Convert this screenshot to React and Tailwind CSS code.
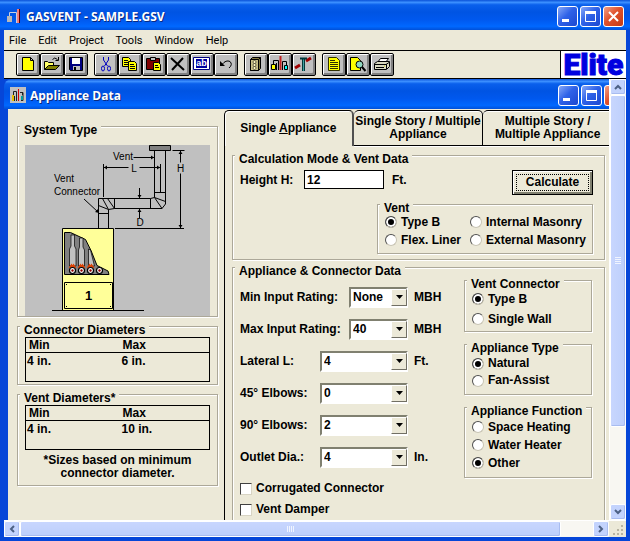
import { useState } from "react";
import clsx from "clsx";

const MENUS = ["File", "Edit", "Project", "Tools", "Window", "Help"];

const ICONS = {
  new: <path d="M6.5 4.5h8l3 3v10h-11z M14.5 4.5v3h3" fill="#ffff00" stroke="#000" />,
  open: (
    <g stroke="#000">
      <path d="M4.5 16.5v-8h3l1 1h5v3" fill="#ffff66" />
      <path d="M4.5 16.5l4-4h11l-4 4z" fill="#808000" />
      <path d="M12.5 6.5q2-3 5 0M18.5 4v3.500h-3" fill="none" />
    </g>
  ),
  save: (
    <g>
      <path d="M5.500 4.500h13v13h-12l-1-1z" fill="#000080" stroke="#000" />
      <path d="M8 5h8v6h-8z" fill="#fff" />
      <path d="M9 13h7v4h-7z" fill="#c0c0c0" />
      <path d="M10 14h2v3h-2z" fill="#000" />
    </g>
  ),
  cut: (
    <g fill="none" stroke="#0000c0">
      <path d="M9.500 4v3l4 6M14.500 4v3l-4 6" />
      <ellipse cx="9" cy="15.500" rx="1.500" ry="2.500" />
      <ellipse cx="15" cy="15.500" rx="1.500" ry="2.500" />
    </g>
  ),
  copy: (
    <g fill="#ffff00" stroke="#000">
      <path d="M4.500 4.500h6l2 2v7h-8zM6 7.500h4M6 9.500h5M6 11.500h5" />
      <path d="M10.500 8.500h6l2 2v7h-8zM12 11.500h4M12 13.500h5M12 15.500h5" />
    </g>
  ),
  paste: (
    <g stroke="#000">
      <path d="M4.500 5.500h13v11h-13z" fill="#800000" />
      <path d="M8.500 4.500h5v3h-5z" fill="#c0c0c0" />
      <path d="M11.500 9.500h5l2 2v6h-7zM13 12.500h3M13 14.500h4" fill="#ffff00" />
    </g>
  ),
  remove: <path d="M5 5l13 12M17 5L6 17" stroke="#000" strokeWidth="2" />,
  rename: (
    <g>
      <path d="M3.500 4.500h16v12h-16z" fill="#fff" stroke="#000080" />
      <path d="M6 6h11v9h-11z" fill="#0000a0" />
      <text x="11.500" y="13" textAnchor="middle" fontSize="9" fontWeight="700" fill="#fff">ab</text>
    </g>
  ),
  undo: (
    <g fill="none" stroke="#000">
      <path d="M8 11.500q4-5 8-3q3 3-1 6.500" />
      <path d="M6 8v5h5z" fill="#000" stroke="none" />
    </g>
  ),
  block: (
    <g stroke="#000">
      <path d="M6.500 6.500l2-2h8v11l-2 2h-8z" fill="#807840" />
      <path d="M6.500 6.500h8v11h-8z" fill="#c8c088" />
      <path d="M14.500 6.500l2-2" />
      <g fill="#fff8c0" strokeWidth="0.500">
        <circle cx="10.500" cy="9" r="1.500" />
        <circle cx="10.500" cy="12" r="1.500" />
        <circle cx="10.500" cy="15" r="1.500" />
      </g>
    </g>
  ),
  common: (
    <g fill="none" stroke="#000">
      <path d="M5.500 11V7.500h5V17M18.500 12V8.500h-4V17M8.500 10v7" />
      <path d="M12.500 3v14" stroke="#c02020" strokeWidth="2" />
      <path d="M3.500 11.500h4v5h-4z" fill="#ffff00" />
      <path d="M16.500 12.500h3v4h-3z" fill="#00ffff" />
    </g>
  ),
  pipe: (
    <g fill="none">
      <path d="M3 15l5-3M14 8l5-3" stroke="#a00000" strokeWidth="3" />
      <path d="M11.500 6v12" stroke="#003838" strokeWidth="3" />
      <path d="M11.500 6v12" stroke="#40a0a0" />
      <path d="M8 5.500h7" stroke="#003838" strokeWidth="2" />
    </g>
  ),
  report: (
    <path
      d="M6.500 4.500h8l3 3v10h-11zM8 7.500h5M8 9.500h8M8 11.500h8M8 13.500h8M8 15.500h8"
      fill="#ffff00"
      stroke="#303000"
    />
  ),
  preview: (
    <g stroke="#000">
      <path d="M4.500 4.500h7l3 3v10h-10z" fill="#ffff00" />
      <circle cx="13.500" cy="11.500" r="3.500" fill="#90d8c0" />
      <path d="M16 14l3.500 4" strokeWidth="2" />
    </g>
  ),
  print: (
    <g stroke="#000" fill="#fff">
      <path d="M7.500 9.500l3-4h8l-3 4z" />
      <path d="M4.500 10.500l3-2h12v5l-3 3h-12z" fill="#d8d8c0" />
      <path d="M5 11.500h11l3-2M16.500 11v5M6 14.500h8" fill="none" />
      <path d="M14 13h1" stroke="#c0c000" />
    </g>
  ),
};

const TOOLBAR = [
  ["new", "open", "save"],
  ["cut", "copy", "paste", "remove", "rename", "undo"],
  ["block", "common", "pipe"],
  ["report", "preview", "print"],
];

const TITLE_GRADIENT =
  "bg-[linear-gradient(#0a52d8_0%,#3c90ff_8%,#0a60ec_16%,#0054e3_40%,#0058ee_65%,#0068ff_88%,#0050d8_100%)]";
const GROUP =
  "min-w-0 border border-[#aca899] shadow-[1px_1px_0_#fff,inset_1px_1px_0_#fff]";

function TitleButton({ kind }) {
  return (
    <button
      type="button"
      aria-label={kind}
      className={clsx(
        "size-[21px] shrink-0 rounded-[3px] border border-white",
        kind === "close"
          ? "bg-[linear-gradient(135deg,#f0a088,#e0512c_45%,#c43a14)]"
          : "bg-[linear-gradient(135deg,#86a8f8,#2f62e8_45%,#1c48d0)]"
      )}
    >
      <svg viewBox="0 0 19 19" className="size-full" fill="none" stroke="#fff">
        {kind === "minimize" && <path d="M4 13.500h7" strokeWidth="3" />}
        {kind === "maximize" && <path d="M4.500 5v9.500h10V5" />}
        {kind === "maximize" && <path d="M4 5.500h11" strokeWidth="3" />}
        {kind === "close" && <path d="M5 5l9 9M14 5l-9 9" strokeWidth="2" />}
      </svg>
    </button>
  );
}

function TitleBar({ title, icon, className }) {
  return (
    <div className={clsx("flex h-[30px] shrink-0 items-center gap-[2px]", TITLE_GRADIENT, className)}>
      {icon}
      <h1 className="flex-1 pl-[2px] font-['Open_Sans',sans-serif] text-[12px] font-bold text-white [text-shadow:1px_1px_0_#0a2a80]">
        {title}
      </h1>
      <TitleButton kind="minimize" />
      <TitleButton kind="maximize" />
      <TitleButton kind="close" />
    </div>
  );
}

function Group({ title, className, children }) {
  return (
    <fieldset className={clsx(GROUP, className)}>
      <legend className="-ml-[5px] h-2 bg-[#ece9d8] px-1 leading-4 whitespace-nowrap">{title}</legend>
      {children}
    </fieldset>
  );
}

function RadioList({ name, options, initial, className, rowClass }) {
  const [value, setValue] = useState(initial);
  return (
    <div className={className}>
      {options.map((option) => (
        <label key={option} className={clsx("flex items-center gap-1 whitespace-nowrap", rowClass)}>
          <input
            type="radio"
            name={name}
            checked={value === option}
            onChange={() => setValue(option)}
            className="size-3 shrink-0 appearance-none rounded-full border border-t-[#505050] border-r-[#c8c4b4] border-b-[#c8c4b4] border-l-[#505050] bg-white checked:bg-black checked:shadow-[inset_0_0_0_2px_#fff]"
          />
          {option}
        </label>
      ))}
    </div>
  );
}

function SelectRow({ label, options, unit, narrow }) {
  const [value, setValue] = useState(options[0]);
  return (
    <label className="flex h-8 items-center whitespace-nowrap">
      <span className="flex w-[168px] shrink-0 items-center justify-between">
        <span>{label}</span>
        <span className={clsx("relative h-[21px]", narrow ? "w-[59px]" : "w-[88px]")}>
          <select
            value={value}
            onChange={(e) => setValue(e.target.value)}
            className="block size-full appearance-none border-2 border-t-[#808070] border-r-white border-b-white border-l-[#808070] bg-white pl-[2px] leading-none"
          >
            {options.map((o) => (
              <option key={o}>{o}</option>
            ))}
          </select>
          <span className="pointer-events-none absolute inset-y-[2px] right-[1px] flex w-4 items-center justify-center border border-t-white border-r-[#716f64] border-b-[#716f64] border-l-white bg-[#ece9d8]">
            <svg width="7" height="4" viewBox="0 0 7 4">
              <path d="M0 0h7L3.500 4z" />
            </svg>
          </span>
        </span>
      </span>
      <span className="pl-[6px]">{unit}</span>
    </label>
  );
}

function CheckRow({ label }) {
  return (
    <label className="flex h-[21px] items-center gap-1">
      <input
        type="checkbox"
        className="size-3 appearance-none border border-t-[#404040] border-r-[#d8d4c4] border-b-[#d8d4c4] border-l-[#404040] bg-white checked:bg-black checked:shadow-[inset_0_0_0_2px_#fff]"
      />
      {label}
    </label>
  );
}

function SizeTable({ min, max }) {
  return (
    <table className="h-[45px] w-full table-fixed border border-black text-left">
      <thead>
        <tr className="h-[15px] border-b border-black leading-[14px]">
          <th className="p-0 pl-[3px]">Min</th>
          <th className="p-0 pl-[5px]">Max</th>
        </tr>
      </thead>
      <tbody>
        <tr className="align-top leading-4">
          <td className="p-0 pl-px">{min}</td>
          <td className="p-0 pl-1">{max}</td>
        </tr>
      </tbody>
    </table>
  );
}

function SystemDiagram() {
  return (
    <svg
      viewBox="0 0 185 171"
      className="block w-full bg-[#c0c0c0] text-[10px] font-normal"
      fill="none"
      stroke="#000"
    >
      <path d="M124.500.5h21v5h-21z" fill="#808080" />
      {/* vent pipe, elbows and connector */}
      <path d="M129.500 5.500v47M140.500 5.500V59l-3.500 4.500H89.500M129.500 47.500h11M129.500 52.500l-4 1H73.500v30M129.500 52.500l11 4M129.500 52.500l7.500 11M125.500 53.500v10M89.500 53.500v10l-6 1v19M73.500 68.500h10M83.500 64.500l-10-4M83.500 64.500l-6-11M89.500 63.500l-7-10" />
      {/* dimension lines */}
      <path d="M135.500 19v28M78.500 19v33M78.500 22.500h25M114.500 22.500h21M108.500 12.500h21M147.500 5.500h12M155.500 5.500v12M155.500 28.500v55M90 83.500h69M114.500 43v10M114.500 64v9M59 54l14 13" />
      <g fill="#000" stroke="none">
        <path d="M79 22.500l3-2v4zM135 22.500l-3-2v4zM129 12.500l-3-2v4zM155.500 6l-2 3h4zM155.500 83l-2-3h4zM114.500 53l-2-3h4zM114.500 64l-2 3h4zM74 68l-4-1 3-3z" />
        <text x="88" y="15">Vent</text>
        <text x="29" y="37">Vent</text>
        <text x="29" y="50">Connector</text>
        <text x="109" y="27" textAnchor="middle">L</text>
        <text x="155.500" y="27" textAnchor="middle">H</text>
        <text x="115" y="81" textAnchor="middle">D</text>
      </g>
      {/* appliance */}
      <path d="M37.500 83.500h51v82h-51z" fill="#ffff99" />
      <path d="M39.500 87.500h6l15 7 5.500 11 6 15 11 5.500 1 3.500H39.500z" fill="#808080" />
      <g fill="#c0c0c0" strokeWidth="0.700">
        <path d="M46 90h3.500v11l1.500 3v17h-6.500v-17l1.500-3z" />
        <path d="M54.500 93h3.500v9l1.500 3v16h-6v-16l1-3z" />
        <path d="M63.500 104l2 1 4 16h-6z" />
      </g>
      {[47.5, 56.5, 65.5, 74.5].map((cx) => (
        <g key={cx}>
          {cx < 70 && <path d={`M${cx - 3} 123l2-3 1 2 1-2 2 3`} stroke="#e04000" strokeWidth="1.500" />}
          <circle cx={cx} cy="125.500" r="3" fill="#fff" strokeWidth="1.200" />
          <circle cx={cx} cy="125.500" r="1" fill="#900000" stroke="#900000" strokeWidth="0.500" />
        </g>
      ))}
      <path d="M39.500 137.500h48v26h-48z" fill="#ffff99" />
      <path d="M41 139.500h1M85 139.500h1M41 161.500h1M85 161.500h1M27 165.500h92" />
      <text
        x="63.500"
        y="155"
        textAnchor="middle"
        className="text-[13px] font-bold"
        fill="#000"
        stroke="none"
      >
        1
      </text>
    </svg>
  );
}

function ScrollButton({ label, d }) {
  return (
    <button
      type="button"
      aria-label={label}
      className="flex size-4 shrink-0 items-center justify-center rounded-[2px] border border-white bg-[#c3d3fd] shadow-[inset_-1px_-1px_0_#a8bcf0]"
    >
      <svg width="8" height="8" viewBox="0 0 8 8" fill="none" stroke="#4d6185" strokeWidth="2">
        <path d={d} />
      </svg>
    </button>
  );
}

const TABS = [
  ["Single Story / Multiple", "Appliance"],
  ["Multiple Story /", "Multiple Appliance"],
];

export default function App() {
  const [height, setHeight] = useState("12");

  return (
    <div className="flex h-screen flex-col overflow-hidden bg-[#0646d8] font-['Liberation_Sans',sans-serif] text-[12px] leading-[13px] font-bold text-black">
      <TitleBar
        title="GASVENT - SAMPLE.GSV"
        className="pt-[2px] pr-[6px] pl-[6px]"
        icon={
          <svg width="16" height="16" viewBox="0 0 16 16" fill="none">
            <path d="M3.500 8V4.500h7V15" stroke="#c8d0e0" />
            <path d="M1 8h5v6H1z" fill="#b8b8b8" />
            <path d="M12 1v14" stroke="#f08080" strokeWidth="2" />
            <path d="M13.500 1v14" stroke="#600000" />
          </svg>
        }
      />

      <div className="mx-1 mb-1 flex min-h-0 flex-1 flex-col bg-[#ece9d8]">
        <nav className="flex h-5 shrink-0 items-center gap-3 pl-[5px] font-[Roboto,sans-serif] text-[11px] font-normal">
          {MENUS.map((m) => (
            <button key={m} type="button">
              {m}
            </button>
          ))}
        </nav>

        <div className="flex h-[29px] shrink-0 border-y border-black">
          <div className="flex flex-1 items-center gap-[6px] pl-3">
            {TOOLBAR.map((group) => (
              <div key={group[0]} className="flex">
                {group.map((name) => (
                  <button
                    key={name}
                    type="button"
                    aria-label={name}
                    className="h-[23px] w-6 rounded-[2px] border border-black bg-[#c0c0c0] shadow-[inset_1px_1px_0_#fff,inset_-2px_-2px_0_#808080]"
                  >
                    <svg viewBox="1 1 22 21" fill="none" className="block size-full">
                      {ICONS[name]}
                    </svg>
                  </button>
                ))}
              </div>
            ))}
          </div>
          <div className="flex w-[66px] items-center justify-center border-l border-black bg-white font-[Roboto,sans-serif] text-[30px] leading-[27px] font-black text-[#0000e0] [-webkit-text-stroke:1px_#0000e0]">
            Elite
          </div>
        </div>

        <div className="flex min-h-0 flex-1">
          <div className="flex min-w-0 flex-1 flex-col overflow-hidden bg-[#0646d8]">
            <TitleBar
              title="Appliance Data"
              className="-mr-5 rounded-tl-lg pt-[2px] pr-1 pl-[6px]"
              icon={
                <svg width="16" height="16" viewBox="0 0 16 16" fill="none" className="bg-[#c0c0c0]">
                  <path d="M3.500 8V4.500h3V14M4.500 9v5M12.500 5v3M10 5.500h3v8h-2" stroke="#202020" />
                  <path d="M8.500 2v12" stroke="#d00000" />
                  <path d="M2 8h2v6H2z" fill="#e8c000" />
                  <path d="M11 9h2v4h-2z" fill="#00a0a0" />
                </svg>
              }
            />

            <div className="ml-1 flex min-h-0 flex-1 overflow-hidden bg-[#ece9d8]">
              <section className="w-[216px] shrink-0 pt-[13px] pr-[6px] pl-[9px]">
                <Group title="System Type" className="px-[7px] pt-[15px]">
                  <SystemDiagram />
                </Group>
                <Group title="Connector Diameters" className="mt-[5px] px-[7px] pt-[7px] pb-[2px]">
                  <SizeTable min="4 in." max="6 in." />
                </Group>
                <Group title="Vent Diameters*" className="mt-[5px] px-[7px] pt-[7px] pb-[5px]">
                  <SizeTable min="4 in." max="10 in." />
                  <p className="pt-1 text-center">
                    *Sizes based on minimum
                    <br />
                    connector diameter.
                  </p>
                </Group>
              </section>

              <section className="flex min-w-0 flex-1 flex-col">
                <div className="-mr-1 grid h-[37px] shrink-0 grid-cols-3 pt-px" role="tablist">
                  <button
                    type="button"
                    role="tab"
                    aria-selected="true"
                    className="rounded-t-[5px] border-t border-r-2 border-l border-t-black border-r-[#505050] border-l-black whitespace-nowrap shadow-[inset_1px_1px_0_#fff]"
                  >
                    <span>
                      Single <u>A</u>ppliance
                    </span>
                  </button>
                  {TABS.map(([first, second]) => (
                    <button
                      key={first}
                      type="button"
                      role="tab"
                      aria-selected="false"
                      className="rounded-t-[5px] border-t border-r border-b border-black whitespace-nowrap shadow-[inset_0_1px_0_#fff,0_1px_0_#fff]"
                    >
                      {first}
                      <br />
                      {second}
                    </button>
                  ))}
                </div>

                <div className="flex min-h-0 flex-1 flex-col overflow-hidden border-l border-black pt-[5px] pr-1 pl-[7px]">
                  <Group title="Calculation Mode & Vent Data" className="shrink-0 pt-[11px] pr-[11px] pb-[5px] pl-[7px]">
                    <div className="flex items-start">
                      <label htmlFor="height" className="w-16 pt-1">
                        Height H:
                      </label>
                      <input
                        id="height"
                        value={height}
                        onChange={(e) => setHeight(e.target.value)}
                        className="h-[19px] w-20 border border-black bg-white pl-[2px]"
                      />
                      <span className="flex-1 pt-1 pl-2">Ft.</span>
                      <button
                        type="button"
                        className="h-[25px] w-[81px] border border-black bg-[#ece9d8] p-[3px] shadow-[inset_1px_1px_0_#fff,inset_-2px_-2px_0_#808070]"
                      >
                        <span className="flex size-full items-center justify-center border border-dotted border-black">
                          Calculate
                        </span>
                      </button>
                    </div>
                    <Group title="Vent" className="mt-[5px] ml-auto w-[216px] px-[7px] pt-[5px] pb-1">
                      <RadioList
                        name="vent"
                        initial="Type B"
                        options={["Type B", "Internal Masonry", "Flex. Liner", "External Masonry"]}
                        className="grid grid-cols-[85px_1fr]"
                        rowClass="h-[18px]"
                      />
                    </Group>
                  </Group>

                  <Group title="Appliance & Connector Data" className="mt-[3px] -mb-2 flex-1 pr-3 pl-[7px]">
                    <div className="flex items-start justify-between">
                      <div className="pt-[10px]">
                        <SelectRow label="Min Input Rating:" options={["None", "20", "40"]} unit="MBH" narrow />
                        <SelectRow label="Max Input Rating:" options={["40", "60", "80"]} unit="MBH" narrow />
                        <SelectRow label="Lateral L:" options={["4", "6", "8"]} unit="Ft." />
                        <SelectRow label="45° Elbows:" options={["0", "1", "2"]} />
                        <SelectRow label="90° Elbows:" options={["2", "3", "4"]} />
                        <SelectRow label="Outlet Dia.:" options={["4", "5", "6"]} unit="In." />
                        <div className="pt-[5px]">
                          <CheckRow label="Corrugated Connector" />
                          <CheckRow label="Vent Damper" />
                        </div>
                      </div>
                      <div className="flex w-32 flex-col gap-2 pt-[5px]">
                        <Group title="Vent Connector" className="px-[7px] pt-[5px] pb-[2px]">
                          <RadioList name="connector" initial="Type B" options={["Type B", "Single Wall"]} rowClass="h-5" />
                        </Group>
                        <Group title="Appliance Type" className="px-[7px] pt-[7px] pb-[5px]">
                          <RadioList name="type" initial="Natural" options={["Natural", "Fan-Assist"]} rowClass="h-[17px]" />
                        </Group>
                        <Group title="Appliance Function" className="px-[7px] pt-[7px] pb-[5px]">
                          <RadioList
                            name="function"
                            initial="Other"
                            options={["Space Heating", "Water Heater", "Other"]}
                            rowClass="h-[18px]"
                          />
                        </Group>
                      </div>
                    </div>
                  </Group>
                </div>
              </section>
            </div>
          </div>

          {/* vertical scroll bar */}
          <div className="flex w-[17px] shrink-0 flex-col border-l border-white bg-[#f8f7f2]">
            <ScrollButton label="Scroll up" d="M1 6l3-3 3 3" />
            <div className="flex h-[332px] items-center justify-center rounded-[2px] border border-white bg-[linear-gradient(90deg,#c8d6fe,#bdcffb)] shadow-[inset_-1px_-1px_0_#a8bcf0]">
              <svg width="6" height="8" viewBox="0 0 6 8" stroke="#f0f4ff">
                <path d="M0 .5h6M0 2.500h6M0 4.500h6M0 6.500h6" />
              </svg>
            </div>
            <div className="flex-1" />
            <ScrollButton label="Scroll down" d="M1 2l3 3 3-3" />
          </div>
        </div>

        {/* horizontal scroll bar */}
        <div className="flex h-[17px] shrink-0 border-t border-white bg-[#f8f7f2]">
          <ScrollButton label="Scroll left" d="M6 1L3 4l3 3" />
          <div className="flex w-[87%] items-center justify-center rounded-[2px] border border-white bg-[linear-gradient(#c8d6fe,#bdcffb)] shadow-[inset_-1px_-1px_0_#a8bcf0]">
            <svg width="8" height="6" viewBox="0 0 8 6" stroke="#f0f4ff">
              <path d="M.5 0v6M2.500 0v6M4.500 0v6M6.500 0v6" />
            </svg>
          </div>
          <div className="flex-1" />
          <ScrollButton label="Scroll right" d="M2 1l3 3-3 3" />
          <svg width="17" height="16" viewBox="0 0 17 16" fill="#b8b4a2" className="shrink-0 bg-[#ece9d8]">
            <path d="M12 4h2v2h-2zM12 8h2v2h-2zM12 12h2v2h-2zM8 8h2v2H8zM8 12h2v2H8zM4 12h2v2H4z" />
          </svg>
        </div>
      </div>
    </div>
  );
}
